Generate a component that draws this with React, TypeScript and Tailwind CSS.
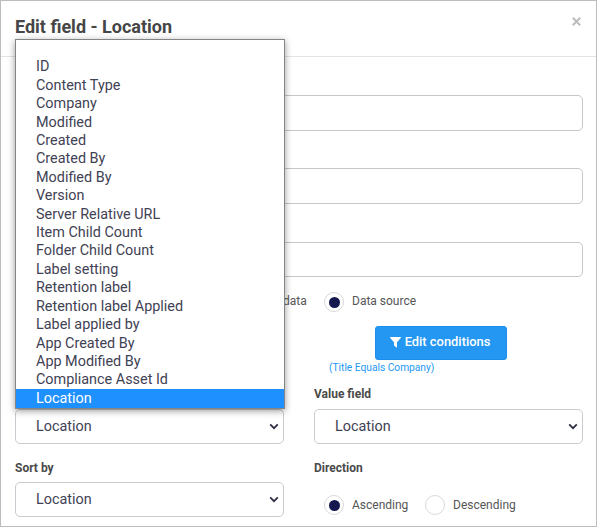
import React from "react";

const options = [
  "ID", "Content Type", "Company", "Modified", "Created", "Created By", "Modified By",
  "Version", "Server Relative URL", "Item Child Count", "Folder Child Count",
  "Label setting", "Retention label", "Retention label Applied", "Label applied by",
  "App Created By", "App Modified By", "Compliance Asset Id", "Location",
];

function SelectBox() {
  return (
    <div className="flex h-[35px] w-[269px] items-center justify-between rounded-[5px] border border-[#c8ccd0] bg-white pl-5 pr-1 text-[14.4px] text-[#3f4254]">
      <span>Location</span>
      <svg width="10" height="7" viewBox="0 0 10 7" fill="none" stroke="#2b2b42" strokeWidth="1.7">
        <path d="M1.2 1.4 5 5.2 8.8 1.4" />
      </svg>
    </div>
  );
}

function Radio({ checked = false }: { checked?: boolean }) {
  return (
    <span className="flex size-5 shrink-0 items-center justify-center rounded-full border border-[#d9d9d9] bg-white">
      {checked && <span className="size-[11px] rounded-full bg-[#15184f]" />}
    </span>
  );
}

export default function App() {
  return (
    <div className="relative flex h-[527px] w-[597px] flex-col overflow-hidden border border-[#bcbcbc] bg-white font-['Roboto',sans-serif] text-[#4a4a4a]">
      <header className="flex h-14 shrink-0 items-start justify-between border-b border-[#e3e3e3] pl-3.5 pr-[15px]">
        <h1 className="mt-[14px] text-[18px] font-bold leading-6 text-[#464646]">Edit field - Location</h1>
        <svg className="mt-4 text-[#bdbdbd]" width="9" height="9" viewBox="0 0 9 9" stroke="currentColor" strokeWidth="2">
          <path d="m.8.8 7.4 7.4M8.2.8.8 8.2" />
        </svg>
      </header>

      <main className="flex flex-col px-3.5 pt-[38px]">
        <div className="flex w-[568px] flex-col">
          <div className="h-[36px] rounded-[5px] border border-[#c6c6c6]" />
          <div className="mt-[37px] h-[36px] rounded-[5px] border border-[#c6c6c6]" />
          <div className="mt-[38px] h-[35px] rounded-[5px] border border-[#c6c6c6]" />
        </div>

        <div className="mt-[15px] flex h-5 items-center pl-[268px] text-[12px] text-[#555]">
          <span className="-mt-0.5 w-[41px]">data</span>
          <Radio checked />
          <span className="-mt-0.5 ml-2">Data source</span>
        </div>

        <div className="mt-[14px] flex h-[34px] pl-[360px]">
          <button className="flex w-[132px] items-center justify-center gap-1 rounded-[3px] border border-[#1b8eee] bg-[#2497f3] pb-0.5 pr-0.5 text-[12.9px] font-medium text-white">
            <svg width="11" height="11" viewBox="0 0 11 11" fill="currentColor">
              <path d="M.2 0h10.6v1.1L7 5.2v5.5L4 8.5V5.2L.2 1.1Z" />
            </svg>
            Edit conditions
          </button>
        </div>
        <p className="h-[15px] pl-[314px] text-[10.2px] leading-[15px] text-[#2497f3]">(Title Equals Company)</p>

        <div className="mt-3 grid grid-cols-[269px_269px] gap-x-[30px]">
          <div className="pt-[22px]"><SelectBox /></div>
          <div>
            <div className="h-[22px] text-[12px] font-bold leading-[14px]">Value field</div>
            <SelectBox />
          </div>
        </div>

        <div className="mt-[17px] grid grid-cols-[269px_269px] gap-x-[30px]">
          <div>
            <div className="h-[21px] text-[12px] font-bold leading-[14px]">Sort by</div>
            <SelectBox />
          </div>
          <div>
            <div className="h-[34px] text-[12px] font-bold leading-[14px]">Direction</div>
            <div className="flex items-center pl-2.5 text-[12px] text-[#555]">
              <Radio checked />
              <span className="ml-2 w-[73px]">Ascending</span>
              <Radio />
              <span className="ml-2">Descending</span>
            </div>
          </div>
        </div>
      </main>

      <ul className="absolute left-3.5 top-[38px] flex h-[370px] w-[270px] flex-col border border-[#858585] bg-white pt-[18px] text-[14.4px] text-[#3f4254] shadow-[0_2px_7px_rgba(0,0,0,0.4)]">
        {options.map((o) => (
          <li
            key={o}
            className={`flex h-[18.42px] shrink-0 items-center pl-5 ${o === "Location" ? "bg-[#1e90ff] text-white" : ""}`}
          >
            {o}
          </li>
        ))}
      </ul>
    </div>
  );
}
